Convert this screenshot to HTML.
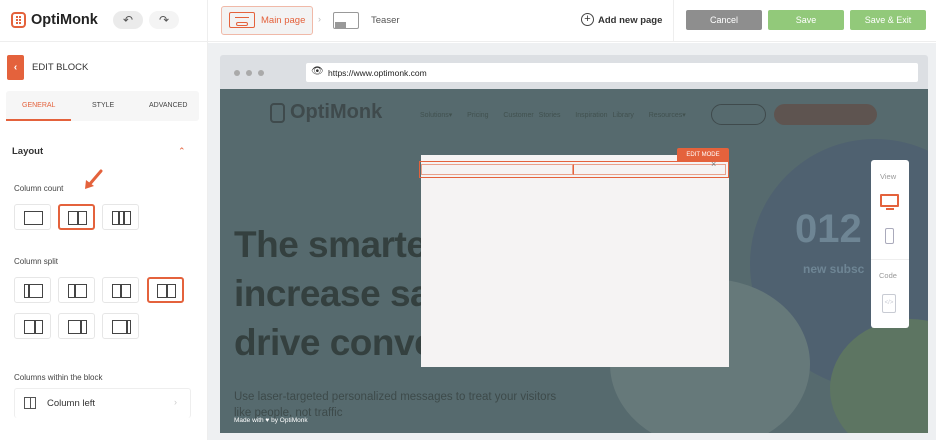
<!DOCTYPE html>
<html><head><style>
*{box-sizing:border-box;margin:0;padding:0}
body{width:936px;height:440px;overflow:hidden;font-family:"Liberation Sans",sans-serif;background:#fff;position:relative;color:#333}
.a{position:absolute}
.btn{position:absolute;border:1px solid #e6e6e6;border-radius:3px;background:#fff;width:37px;height:26px}
.btn.s{border:2px solid #e4623c}
.ic{position:absolute;left:9px;top:6px;width:19px;height:14px;border:1.5px solid #444}
.ic i{position:absolute;top:0;bottom:0;width:1.5px;background:#444}
.tb{position:absolute;top:10px;height:20px;border-radius:2px;color:#fff;font-size:9px;text-align:center;line-height:20px}
</style></head><body>
<!-- top bar -->
<div class="a" style="left:0;top:0;width:936px;height:42px;background:#fff;border-bottom:1px solid #eee"></div>
<div class="a" style="left:11px;top:12px;width:15px;height:16px;border:2px solid #e4623c;border-radius:4px"></div>
<div class="a" style="left:16px;top:16px;width:5px;height:8px;border-left:2px dotted #e4623c;border-right:2px dotted #e4623c"></div>
<div class="a" style="left:31px;top:12px;font-size:14.5px;font-weight:bold;color:#222">OptiMonk</div>
<div class="a" style="left:113px;top:11px;width:30px;height:18px;border-radius:9px;background:#ebebeb;text-align:center;font-size:12px;line-height:18px;color:#555">↶</div>
<div class="a" style="left:149px;top:11px;width:30px;height:18px;border-radius:9px;background:#f4f4f4;text-align:center;font-size:12px;line-height:18px;color:#555">↷</div>
<div class="a" style="left:207px;top:0;width:1px;height:440px;background:#eee"></div>
<div class="a" style="left:221px;top:6px;width:92px;height:29px;border:1px solid #f0b9a8;background:#f3f3f3;border-radius:3px"></div>
<div class="a" style="left:229px;top:12px;width:26px;height:16px;border:1.5px solid #e4623c;border-radius:2px"></div>
<div class="a" style="left:236px;top:22px;width:12px;height:4px;border:1px solid #e4623c;border-radius:2px"></div>
<div class="a" style="left:235px;top:17px;width:14px;height:1px;background:#e4623c"></div>
<div class="a" style="left:261px;top:15px;font-size:9.5px;color:#e4623c">Main page</div>
<div class="a" style="left:318px;top:14px;font-size:9px;color:#bbb">›</div>
<div class="a" style="left:333px;top:12px;width:26px;height:17px;border:1.5px solid #999;border-radius:2px"></div>
<div class="a" style="left:335px;top:22px;width:11px;height:6px;background:#999"></div>
<div class="a" style="left:371px;top:15px;font-size:9.5px;color:#555">Teaser</div>
<div class="a" style="left:581px;top:13px;width:13px;height:13px;border:1px solid #444;border-radius:50%;font-size:11px;line-height:11px;text-align:center">+</div>
<div class="a" style="left:598px;top:15px;font-size:9.5px;font-weight:bold;color:#333">Add new page</div>
<div class="a" style="left:673px;top:0;width:1px;height:42px;background:#eee"></div>
<div class="tb" style="left:686px;width:76px;background:#8e8e8e">Cancel</div>
<div class="tb" style="left:768px;width:76px;background:#92c97a">Save</div>
<div class="tb" style="left:850px;width:76px;background:#92c97a">Save &amp; Exit</div>
<!-- left panel -->
<div class="a" style="left:7px;top:55px;width:17px;height:25px;background:#e4623c;border-radius:2px;color:#fff;font-size:10px;text-align:center;line-height:25px;font-weight:bold">‹</div>
<div class="a" style="left:32px;top:62px;font-size:9.5px;color:#333">EDIT BLOCK</div>
<div class="a" style="left:6px;top:91px;width:193px;height:30px;background:#f6f6f6;border-radius:3px"></div>
<div class="a" style="left:22px;top:102px;font-size:7px;color:#e4623c">GENERAL</div>
<div class="a" style="left:6px;top:119px;width:65px;height:2px;background:#e4623c"></div>
<div class="a" style="left:92px;top:102px;font-size:7px;color:#444">STYLE</div>
<div class="a" style="left:149px;top:102px;font-size:7px;color:#444">ADVANCED</div>
<div class="a" style="left:12px;top:146px;font-size:9.5px;font-weight:bold;color:#333">Layout</div>
<div class="a" style="left:178px;top:146px;font-size:9px;color:#e4623c">⌃</div>
<div class="a" style="left:14px;top:184px;font-size:8px;color:#444">Column count</div>
<svg class="a" style="left:82px;top:168px" width="22" height="24"><path d="M19 3 L7 17" stroke="#e4623c" stroke-width="3" stroke-linecap="round"/><path d="M3 21 L4 12 L12 18 Z" fill="#e4623c"/></svg>
<div class="btn" style="left:14px;top:204px"><div class="ic"></div></div>
<div class="btn s" style="left:58px;top:204px"><div class="ic" style="left:8px;top:5px"><i style="left:8px"></i></div></div>
<div class="btn" style="left:102px;top:204px"><div class="ic"><i style="left:5px"></i><i style="left:10px"></i></div></div>
<div class="a" style="left:14px;top:257px;font-size:8px;color:#444">Column split</div>
<div class="btn" style="left:14px;top:277px"><div class="ic"><i style="left:3px"></i></div></div>
<div class="btn" style="left:58px;top:277px"><div class="ic"><i style="left:5px"></i></div></div>
<div class="btn" style="left:102px;top:277px"><div class="ic"><i style="left:7px"></i></div></div>
<div class="btn s" style="left:147px;top:277px"><div class="ic" style="left:8px;top:5px"><i style="left:8px"></i></div></div>
<div class="btn" style="left:14px;top:313px"><div class="ic"><i style="left:9px"></i></div></div>
<div class="btn" style="left:58px;top:313px"><div class="ic"><i style="left:11px"></i></div></div>
<div class="btn" style="left:102px;top:313px"><div class="ic"><i style="left:13px"></i></div></div>
<div class="a" style="left:14px;top:373px;font-size:8px;color:#444">Columns within the block</div>
<div class="a" style="left:14px;top:388px;width:177px;height:30px;border:1px solid #eee;border-bottom:none;border-radius:3px"></div>
<div class="a" style="left:24px;top:397px;width:12px;height:12px;border:1px solid #555"><div class="a" style="left:5px;top:0;width:1px;height:10px;background:#555"></div></div>
<div class="a" style="left:47px;top:398px;font-size:9.5px;color:#333">Column left</div>
<div class="a" style="left:174px;top:397px;font-size:9px;color:#ccc">›</div>
<!-- canvas -->
<div class="a" style="left:208px;top:43px;width:728px;height:397px;background:#eef0f2"></div>
<div class="a" style="left:220px;top:55px;width:708px;height:34px;background:#dcdfe3;border-radius:3px 3px 0 0"></div>
<div class="a" style="left:234px;top:70px;width:6px;height:6px;border-radius:50%;background:#aaa;box-shadow:12px 0 #aaa,24px 0 #aaa"></div>
<div class="a" style="left:306px;top:63px;width:612px;height:19px;background:#fff;border-radius:2px"></div>
<div class="a" style="left:311px;top:66px;font-size:10px">👁</div>
<div class="a" style="left:328px;top:68px;font-size:8.5px;color:#222">https://www.optimonk.com</div>
<div class="a" style="left:220px;top:89px;width:708px;height:344px;background:#566a6e;overflow:hidden">
 <div class="a" style="left:530px;top:50px;width:250px;height:250px;border-radius:50%;background:#4f6170"></div>
 <div class="a" style="left:390px;top:190px;width:200px;height:170px;border-radius:50%;background:#66797a"></div>
 <div class="a" style="left:610px;top:230px;width:160px;height:140px;border-radius:50%;background:#5d7562"></div>
 <div class="a" style="left:50px;top:14px;width:15px;height:20px;border:2px solid #3f4a4c;border-radius:4px"></div>
 <div class="a" style="left:70px;top:12px;font-size:20px;font-weight:bold;color:#3f4a4c">OptiMonk</div>
 <div class="a" style="left:200px;top:22px;font-size:7px;color:#41514f;word-spacing:3px">Solutions▾ &nbsp; Pricing &nbsp; Customer Stories &nbsp; Inspiration Library &nbsp; Resources▾</div>
 <div class="a" style="left:491px;top:15px;width:55px;height:21px;border:1.5px solid #3f4a4c;border-radius:11px"></div>
 <div class="a" style="left:554px;top:15px;width:103px;height:21px;background:#5e5450;border-radius:11px"></div>
 <div class="a" style="left:14px;top:131px;font-size:37px;font-weight:bold;color:#34403f;line-height:49px;letter-spacing:-0.5px">The smarter<br>increase sa<br>drive conve</div>
 <div class="a" style="left:575px;top:118px;font-size:40px;font-weight:bold;color:#6e8594">012</div>
 <div class="a" style="left:583px;top:173px;font-size:12px;font-weight:bold;color:#6e8594">new subsc</div>
 <div class="a" style="left:14px;top:300px;font-size:11.5px;color:#3d4a4a;line-height:16px">Use laser-targeted personalized messages to treat your visitors<br>like people, not traffic</div>
 <div class="a" style="left:14px;top:328px;font-size:6.5px;color:#fff">Made with ♥ by OptiMonk</div>
</div>
<!-- popup -->
<div class="a" style="left:421px;top:155px;width:308px;height:212px;background:#f5f3f3"></div>
<div class="a" style="left:677px;top:148px;width:52px;height:14px;background:#e4623c;border-radius:2px 2px 0 0;color:#fff;font-size:6px;text-align:center;line-height:14px">EDIT MODE</div>
<div class="a" style="left:419px;top:161px;width:310px;height:17px;border:1.5px solid #e4623c"></div>
<div class="a" style="left:421px;top:164px;width:152px;height:11px;border:1px solid #eaa08a"></div>
<div class="a" style="left:573px;top:164px;width:153px;height:11px;border:1px solid #eaa08a;border-left:1.5px solid #e4623c"></div>
<div class="a" style="left:711px;top:159px;font-size:9px;color:#777">×</div>
<!-- side panel -->
<div class="a" style="left:871px;top:160px;width:38px;height:168px;background:#fff;border-radius:3px"></div>
<div class="a" style="left:880px;top:172px;font-size:7.5px;color:#999">View</div>
<div class="a" style="left:880px;top:194px;width:19px;height:13px;border:2.5px solid #e4623c;border-radius:1px"></div>
<div class="a" style="left:886px;top:208px;width:8px;height:2px;background:#e4623c"></div>
<div class="a" style="left:885px;top:228px;width:9px;height:16px;border:1.5px solid #aab;border-radius:2px"></div>
<div class="a" style="left:871px;top:259px;width:38px;height:1px;background:#eee"></div>
<div class="a" style="left:879px;top:271px;font-size:7.5px;color:#999">Code</div>
<div class="a" style="left:882px;top:294px;width:14px;height:19px;border:1.5px solid #c8cbd3;border-radius:2px;font-size:6px;color:#c8cbd3;text-align:center;line-height:16px">&lt;/&gt;</div>
</body></html>
